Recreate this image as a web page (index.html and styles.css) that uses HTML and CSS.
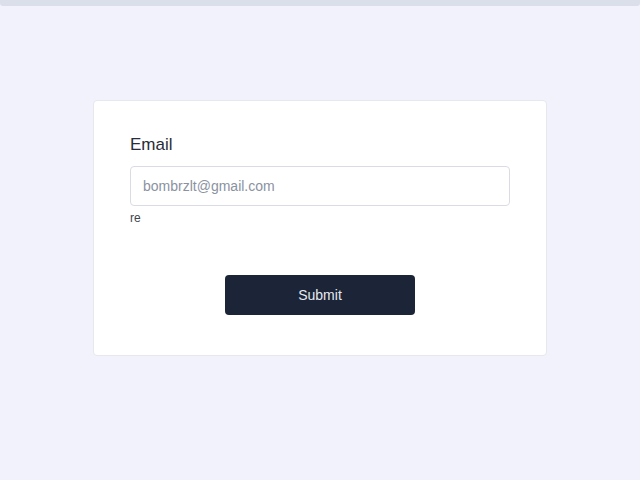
FILE: index.html
```html
<!DOCTYPE html>
<html>
<head>
<meta charset="utf-8">
<link rel="stylesheet" href="styles.css">
</head>
<body>
<div class="topbar"></div>
<main class="page">
  <form class="card">
    <label class="label" for="email">Email</label>
    <input class="input" id="email" type="email" placeholder="bombrzlt@gmail.com">
    <div class="hint">re</div>
    <div class="actions">
      <button class="btn" type="button">Submit</button>
    </div>
  </form>
</main>
</body>
</html>
```
FILE: styles.css
```css
* { box-sizing: border-box; }
html, body { margin: 0; padding: 0; }
body {
  background: #f2f2fc;
  font-family: "Liberation Sans", Arial, sans-serif;
  width: 640px;
  height: 480px;
  overflow: hidden;
}
.topbar {
  height: 6px;
  background: #dbdfe9;
  border-radius: 0 0 3px 3px;
}
.page {
  display: flex;
  justify-content: center;
  padding-top: 94px;
}
.card {
  width: 454px;
  background: #ffffff;
  border: 1px solid #e6e8ee;
  border-radius: 4px;
  padding: 34px 36px 40px;
  display: flex;
  flex-direction: column;
}
.label {
  font-size: 17px;
  line-height: 20px;
  color: #272d39;
  margin-bottom: 11px;
}
.input {
  height: 40px;
  width: 100%;
  border: 1px solid #d9dce2;
  border-radius: 4px;
  padding: 0 12px;
  font-family: inherit;
  font-size: 14px;
  color: #272d39;
  outline: none;
}
.input::placeholder { color: #8a92a1; }
.hint {
  font-size: 12px;
  line-height: 16px;
  color: #3f4550;
  margin-top: 4px;
}
.actions {
  display: flex;
  justify-content: center;
  margin-top: 49px;
}
.btn {
  width: 190px;
  height: 40px;
  background: #1b2537;
  color: #e6e9ef;
  border: none;
  border-radius: 4px;
  font-family: inherit;
  font-size: 14px;
}
```
